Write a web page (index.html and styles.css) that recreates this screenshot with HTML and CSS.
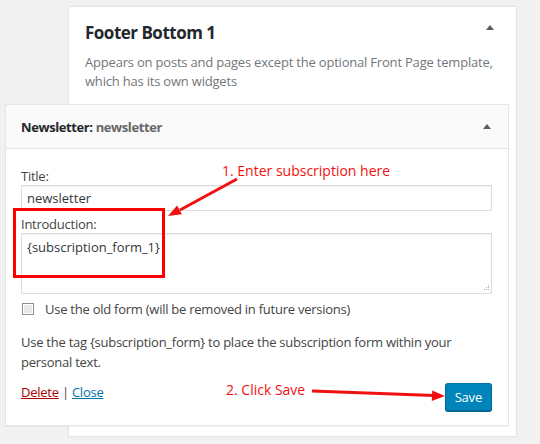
FILE: index.html
```html
<!DOCTYPE html>
<html>
<head>
<meta charset="utf-8">
<link rel="stylesheet" href="styles.css">
</head>
<body>
<div class="sidebar">
  <div class="sidebar-head">
    <h2 class="sidebar-title">Footer Bottom 1</h2>
    <span class="toggle toggle-back"></span>
  </div>
  <p class="sidebar-desc">Appears on posts and pages except the optional Front Page template, which has its own widgets</p>
</div>

<div class="widget">
  <div class="widget-top">
    <h3 class="widget-title">Newsletter: <span class="in-title">newsletter</span></h3>
    <span class="toggle"></span>
  </div>
  <div class="widget-inside">
    <label class="field-label">Title:</label>
    <div class="input">newsletter</div>
    <label class="field-label">Introduction:</label>
    <div class="textarea">{subscription_form_1}<svg class="grip" width="7" height="7" viewBox="0 0 7 7"><rect x="5" y="0" width="1" height="1" fill="#aaa"/><rect x="3" y="2" width="1" height="1" fill="#aaa"/><rect x="5" y="2" width="1" height="1" fill="#aaa"/><rect x="1" y="4" width="1" height="1" fill="#aaa"/><rect x="3" y="4" width="1" height="1" fill="#aaa"/><rect x="5" y="4" width="1" height="1" fill="#aaa"/></svg></div>
    <div class="check-row"><span class="checkbox"></span><span>Use the old form (will be removed in future versions)</span></div>
    <p class="hint">Use the tag {subscription_form} to place the subscription form within your personal text.</p>
    <div class="actions">
      <div class="links"><a class="delete">Delete</a> | <a class="close">Close</a></div>
      <button class="save">Save</button>
    </div>
  </div>
</div>

<div class="highlight"></div>
<span class="note note-1">1. Enter subscription here</span>
<span class="note note-2">2. Click Save</span>
<svg class="arrows" width="540" height="444" viewBox="0 0 540 444">
  <line x1="237" y1="179" x2="180" y2="210" stroke="#f01010" stroke-width="3"/>
  <polygon points="168,216 181.9,214.3 177.1,205.5" fill="#f01010"/>
  <line x1="312" y1="391" x2="434" y2="395.5" stroke="#f01010" stroke-width="3"/>
  <polygon points="445,396 431.8,401 432.2,390.5" fill="#f01010"/>
</svg>
</body>
</html>
```
FILE: styles.css
```css
html, body {
  margin: 0;
  padding: 0;
  background: #f1f1f1;
  font-family: "Open Sans", "Liberation Sans", sans-serif;
  font-size: 13px;
  color: #444;
}

.sidebar {
  margin: 6px 0 0 68px;
  width: 449px;
  height: 431px;
  box-sizing: border-box;
  background: #fff;
  border: 1px solid #e5e5e5;
  padding: 13px 16px;
}

.sidebar-head {
  display: flex;
  justify-content: space-between;
  align-items: flex-start;
}

.sidebar-title {
  margin: 0;
  font-size: 17px;
  line-height: 25px;
  font-weight: 700;
  color: #23282d;
  letter-spacing: -0.5px;
}

.toggle {
  width: 0;
  height: 0;
  border-left: 4px solid transparent;
  border-right: 4px solid transparent;
  border-bottom: 5px solid #555d66;
}

.toggle-back {
  margin: 5px 6px 0 0;
}

.sidebar-desc {
  margin: 8px 0 0;
  line-height: 19px;
  color: #72777c;
  letter-spacing: -0.2px;
}

.widget {
  position: absolute;
  left: 5px;
  top: 104px;
  width: 504px;
  height: 322px;
  box-sizing: border-box;
  background: #fff;
  border: 1px solid #e5e5e5;
  box-shadow: 0 1px 1px rgba(0,0,0,0.04);
}

.widget-top {
  height: 43px;
  background: #fafafa;
  border-bottom: 1px solid #e5e5e5;
  display: flex;
  align-items: center;
  justify-content: space-between;
  padding: 0 17px 0 15px;
}

.widget-title {
  margin: 0;
  font-size: 13px;
  font-weight: 700;
  color: #23282d;
  letter-spacing: -0.4px;
}

.in-title {
  color: #666;
  font-weight: 700;
}

.widget-inside {
  padding: 18px 16px 0 15px;
  display: flex;
  flex-direction: column;
  letter-spacing: -0.25px;
}

.field-label {
  line-height: 18px;
  color: #444;
}

.input {
  height: 26px;
  box-sizing: border-box;
  border: 1px solid #ddd;
  box-shadow: inset 0 1px 2px rgba(0,0,0,0.07);
  font-size: 13px;
  line-height: 24px;
  padding: 0 5px;
  color: #32373c;
  margin-bottom: 4px;
  letter-spacing: 0;
}

.textarea {
  position: relative;
  height: 61px;
  box-sizing: border-box;
  border: 1px solid #ddd;
  box-shadow: inset 0 1px 2px rgba(0,0,0,0.07);
  font-size: 13px;
  line-height: 22px;
  padding: 2px 5px;
  color: #32373c;
  letter-spacing: 0;
}

.grip {
  position: absolute;
  right: 1px;
  bottom: 1px;
}

.check-row {
  margin-top: 5px;
  display: flex;
  align-items: center;
  line-height: 20px;
  color: #444;
}

.checkbox {
  width: 12px;
  height: 12px;
  box-sizing: border-box;
  margin: 0 11px 0 1px;
  border: 1px solid #8f8f8f;
  background: #e9e9e9;
  box-shadow: inset 0 0 0 1px #fff;
}

.hint {
  margin: 13px 0 0;
  line-height: 20px;
  color: #444;
}

.actions {
  margin-top: 10px;
  display: flex;
  justify-content: space-between;
  align-items: flex-start;
}

.links {
  line-height: 20px;
  color: #444;
}

.delete {
  color: #a00;
  text-decoration: underline;
}

.close {
  color: #0073aa;
  text-decoration: underline;
}

.save {
  height: 28px;
  padding: 0 9px;
  margin-top: 1px;
  font-family: "Open Sans", "Liberation Sans", sans-serif;
  font-size: 13px;
  letter-spacing: -0.2px;
  color: #fff;
  background: #0085ba;
  border: 1px solid #0073aa;
  border-color: #0073aa #006799 #006799;
  border-radius: 3px;
  box-shadow: 0 1px 0 #006799;
}

.highlight {
  position: absolute;
  left: 13px;
  top: 208px;
  width: 152px;
  height: 70px;
  box-sizing: border-box;
  border: 3px solid #f00;
}

.note {
  position: absolute;
  font-size: 14px;
  line-height: 18px;
  color: #f01010;
}

.note-1 {
  left: 222px;
  top: 162px;
}

.note-2 {
  left: 226px;
  top: 381px;
}

.arrows {
  position: absolute;
  left: 0;
  top: 0;
}
```
